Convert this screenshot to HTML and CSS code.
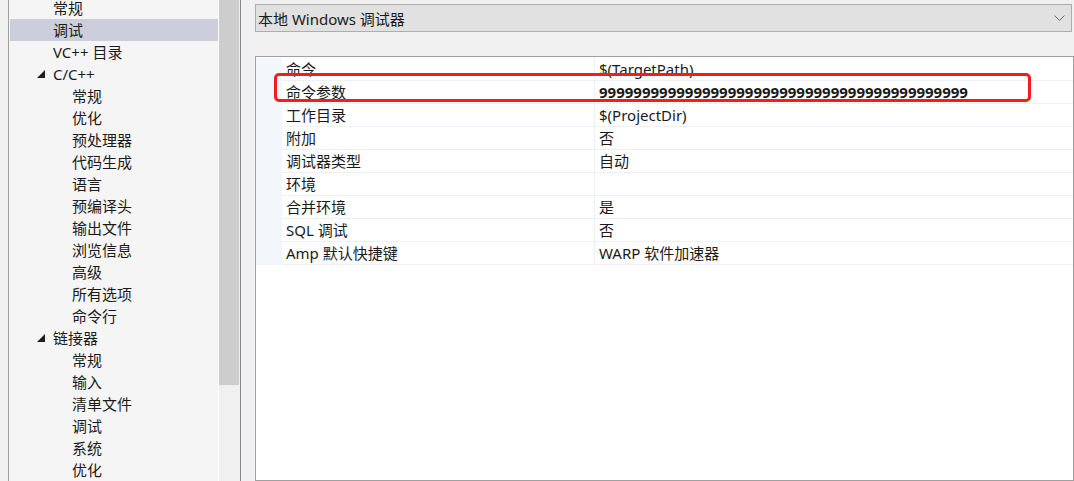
FILE: index.html
```html
<!DOCTYPE html>
<html lang="zh">
<head>
<meta charset="utf-8">
<title>调试</title>
<link rel="stylesheet" href="styles.css">
</head>
<body>
<div class="app">
  <div class="tree-wrap">
    <div class="tree">
      <div class="list">
        <div class="item l1">常规</div>
        <div class="item l1 sel">调试</div>
        <div class="item l1">VC++ 目录</div>
        <div class="item l1 exp"><span class="twisty"><svg width="8" height="8" viewBox="0 0 8 8"><polygon points="8,0 8,8 0,8" fill="#1e1e1e"/></svg></span>C/C++</div>
        <div class="item l2">常规</div>
        <div class="item l2">优化</div>
        <div class="item l2">预处理器</div>
        <div class="item l2">代码生成</div>
        <div class="item l2">语言</div>
        <div class="item l2">预编译头</div>
        <div class="item l2">输出文件</div>
        <div class="item l2">浏览信息</div>
        <div class="item l2">高级</div>
        <div class="item l2">所有选项</div>
        <div class="item l2">命令行</div>
        <div class="item l1 exp"><span class="twisty"><svg width="8" height="8" viewBox="0 0 8 8"><polygon points="8,0 8,8 0,8" fill="#1e1e1e"/></svg></span>链接器</div>
        <div class="item l2">常规</div>
        <div class="item l2">输入</div>
        <div class="item l2">清单文件</div>
        <div class="item l2">调试</div>
        <div class="item l2">系统</div>
        <div class="item l2">优化</div>
      </div>
    </div>
    <div class="scrollbar"><div class="thumb"></div></div>
  </div>
  <div class="main">
    <div class="combo">
      <span class="combo-text">本地 Windows 调试器</span>
      <svg class="chev" width="11" height="7" viewBox="0 0 11 7"><polyline points="0.5,0.5 5.5,5.5 10.5,0.5" fill="none" stroke="#6a6a6a" stroke-width="1"/></svg>
    </div>
    <div class="grid">
      <div class="row"><div class="gut"></div><div class="name">命令</div><div class="val">$(TargetPath)</div></div>
      <div class="row"><div class="gut"></div><div class="name">命令参数</div><div class="val bold">9999999999999999999999999999999999999999999</div></div>
      <div class="row"><div class="gut"></div><div class="name">工作目录</div><div class="val">$(ProjectDir)</div></div>
      <div class="row"><div class="gut"></div><div class="name">附加</div><div class="val">否</div></div>
      <div class="row"><div class="gut"></div><div class="name">调试器类型</div><div class="val">自动</div></div>
      <div class="row"><div class="gut"></div><div class="name">环境</div><div class="val"></div></div>
      <div class="row"><div class="gut"></div><div class="name">合并环境</div><div class="val">是</div></div>
      <div class="row"><div class="gut"></div><div class="name">SQL 调试</div><div class="val">否</div></div>
      <div class="row"><div class="gut"></div><div class="name">Amp 默认快捷键</div><div class="val">WARP 软件加速器</div></div>
    </div>
  </div>
</div>
<div class="highlight"></div>
</body>
</html>
```
FILE: styles.css
```css
* { box-sizing: border-box; }
html, body {
  margin: 0;
  padding: 0;
  width: 1074px;
  height: 481px;
  overflow: hidden;
  background: #f0f0f0;
  font-family: "Noto Sans", "Noto Sans CJK SC", sans-serif;
  font-size: 15px;
  color: #1a1a1a;
}
.app {
  display: flex;
  height: 481px;
}
.tree-wrap {
  display: flex;
  margin-left: 8px;
  border-left: 1px solid #a0a0a0;
  height: 481px;
}
.tree {
  width: 210px;
  background: #f5f5f5;
  border-right: 1px solid #ffffff;
  padding-left: 1px;
  overflow: hidden;
}
.list {
  margin-top: -3px;
}
.item {
  height: 22px;
  line-height: 22px;
  white-space: nowrap;
  display: flex;
  align-items: center;
}
.item.l1 { padding-left: 43px; }
.item.l1.exp { padding-left: 27px; }
.item.l2 { padding-left: 62px; }
.item.sel { background: #cccedb; }
.twisty {
  width: 16px;
  display: flex;
  align-items: center;
  height: 22px;
  padding-bottom: 1px;
}
.twisty svg { display: block; }
.scrollbar {
  width: 21px;
  background: #f0f0f0;
}
.thumb {
  width: 20px;
  height: 385px;
  background: #cdcdcd;
}
.main {
  flex: 1;
  border-left: 1px solid #828790;
  padding: 4px 0 0 14px;
  display: flex;
  flex-direction: column;
}
.combo {
  width: 817px;
  height: 28px;
  background: #e1e1e1;
  border: 1px solid #adadad;
  display: flex;
  align-items: center;
  justify-content: space-between;
  padding: 0 6px 0 2px;
}
.combo-text { white-space: nowrap; }
.chev { display: block; margin-top: 1px; }
.grid {
  margin-top: 24px;
  width: 819px;
  flex: 1;
  background: #ffffff;
  border: 1px solid #a0a0a0;
  padding-top: 1px;
}
.row {
  display: flex;
  height: 23px;
}
.gut {
  width: 26px;
  background: #f3f6fb;
}
.name, .val {
  height: 23px;
  line-height: 22px;
  border-bottom: 1px solid #edf0f7;
  padding-left: 4px;
  white-space: nowrap;
}
.name {
  width: 313px;
  border-right: 1px solid #edf0f7;
}
.val { flex: 1; }
.val.bold { font-weight: bold; }
.highlight {
  position: absolute;
  left: 274px;
  top: 73px;
  width: 757px;
  height: 29px;
  border: 3px solid #f21d1d;
  border-radius: 5px;
}
```
